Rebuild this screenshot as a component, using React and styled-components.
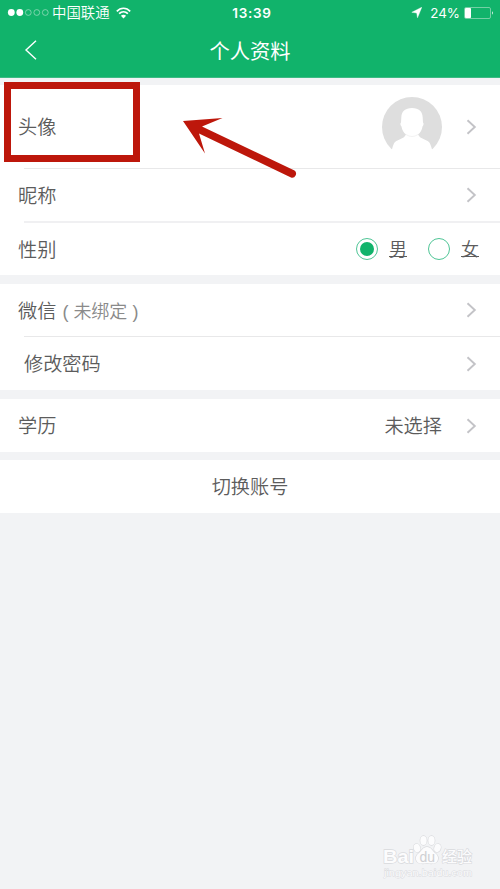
import styled, { createGlobalStyle } from "styled-components";

const GlobalStyle = createGlobalStyle`
  * {
    box-sizing: border-box;
  }
  body {
    margin: 0;
    background: #f2f3f5;
    color: #5c5c5c;
    font-family: "Liberation Sans", "Noto Sans CJK SC", sans-serif;
  }
`;

const Layout = styled.div`
  position: relative;
  display: flex;
  flex-direction: column;
  height: 889px;
  overflow: hidden;
  background: #f2f3f5;
`;
const Header = styled.header`
  height: 78px;
  background: #11b36b;
  border-bottom: 1px solid #3dbb84;
  color: #fff;
`;
const StatusBar = styled.div`
  display: grid;
  grid-template-columns: 1fr auto 1fr;
  align-items: center;
  height: 25px;
  padding: 0 6px 0 7px;
  font-family: Inter, "Noto Sans CJK SC", sans-serif;
`;
const StatusSide = styled.div`
  display: flex;
  align-items: center;
  justify-content: ${({ $end }) => ($end ? "flex-end" : "flex-start")};
`;
const Carrier = styled.span`
  margin: 0 6px 0 2px;
  font-size: 14.4px;
  line-height: 24px;
  font-weight: 350;
`;
const Time = styled.span`
  margin-left: 3px;
  font-size: 13.5px;
  font-weight: 600;
  letter-spacing: 0.7px;
`;
const Percent = styled.span`
  margin: 0 4px 0 8px;
  font-size: 13.4px;
`;
const NavBar = styled.div`
  display: grid;
  grid-template-columns: 60px 1fr 60px;
  align-items: center;
  height: 50px;
`;
const BackIcon = styled.svg`
  margin-left: 24px;
`;
const Title = styled.h1`
  margin: 4px 0 0;
  font-size: 20.3px;
  font-weight: 400;
  line-height: 30px;
  text-align: center;
`;
const Group = styled.section`
  margin-top: ${({ $gap }) => $gap || 8}px;
  background: #fff;
`;
const Row = styled.div`
  display: flex;
  align-items: center;
  justify-content: ${({ $center }) => ($center ? "center" : "space-between")};
  height: ${({ $height }) => $height || 53}px;
  padding: 0 ${({ $center }) => ($center ? 18 : 23)}px 0
    ${({ $indent }) => ($indent ? 24 : 18)}px;
`;
const Divider = styled.div`
  height: ${({ $size }) => $size || 1}px;
  margin-left: 24px;
  background: ${({ $size }) => ($size ? "#f0f0f2" : "#e8e8e9")};
`;
const Label = styled.span`
  padding-top: 3px;
  font-size: 19.2px;
  font-weight: 350;
  line-height: 28px;
`;
const Hint = styled.span`
  display: inline-flex;
  gap: 5px;
  margin-left: 6px;
  color: #8a8a8a;
  font-size: 18px;
`;
const Side = styled.div`
  display: flex;
  align-items: center;
  gap: ${({ $gap }) => $gap || 24}px;
`;
const RadioGroup = styled.div`
  display: flex;
  align-items: center;
  gap: 21px;
  margin-right: -2px;
`;
const RadioOption = styled.div`
  display: flex;
  align-items: center;
  gap: 11px;
`;
const Radio = styled.span`
  display: grid;
  place-items: center;
  width: 22px;
  height: 22px;
  border: 1px solid #4fc596;
  border-radius: 50%;
  &::after {
    content: "";
    width: 14px;
    height: 14px;
    border-radius: 50%;
    background: ${({ $checked }) => ($checked ? "#11b36b" : "transparent")};
  }
`;
const RadioText = styled.span`
  padding-top: 1px;
  font-size: 18px;
  font-weight: 350;
  line-height: 26px;
  text-decoration: underline;
  text-decoration-thickness: 1px;
  text-underline-offset: 0;
`;
const Highlight = styled.div`
  position: absolute;
  left: 4px;
  top: 82px;
  width: 136px;
  height: 80px;
  border: 7px solid #bd170b;
`;
const Pointer = styled.svg`
  position: absolute;
  left: 180px;
  top: 114px;
`;
const Watermark = styled.svg`
  position: absolute;
  left: 380px;
  top: 830px;
`;

const SignalDots = () => (
  <svg width="43" height="10" viewBox="0 0 43 10">
    {[0, 1, 2, 3, 4].map((index) => (
      <circle
        key={index}
        cx={4.3 + index * 8.5}
        cy="4.5"
        r={index < 2 ? 3.4 : 2.9}
        fill={index < 2 ? "#fff" : "none"}
        stroke={index < 2 ? "none" : "#a5e0c5"}
        strokeWidth="0.7"
      />
    ))}
  </svg>
);

const Wifi = () => (
  <svg width="15" height="12" viewBox="0 0 15 12" fill="none" stroke="#fff">
    <path d="M.8 4.3C4.6.2 10.4.2 14.2 4.3" strokeWidth="1.7" />
    <path d="M3.1 6.7c2.6-2.6 6.2-2.6 8.8 0" strokeWidth="1.7" />
    <path d="M4.9 8.7q2.6-2 5.2 0L7.5 11.4z" fill="#fff" stroke="none" />
  </svg>
);

const Location = () => (
  <svg width="11" height="11" viewBox="0 0 11 11">
    <path d="M10.8.2 6.5 10.8 5.7 6 .8 5.3z" fill="#fff" stroke="#fff" strokeWidth=".4" />
  </svg>
);

const Battery = () => (
  <svg width="30" height="12" viewBox="0 0 30 12">
    <rect x=".5" y=".5" width="26" height="11" rx="1.5" fill="none" stroke="#74d0a5" />
    <rect x="1" y="1" width="6" height="10" rx=".8" fill="#fff" />
    <path d="M28 4.3q2 1.7 0 3.4z" fill="#d3f0e2" />
  </svg>
);

const Chevron = () => (
  <svg width="11" height="16" viewBox="0 0 11 16">
    <path d="m1.5 1.2 7.3 6.8-7.3 6.8" fill="none" stroke="#c3c3c7" strokeWidth="1.9" />
  </svg>
);

const Avatar = () => (
  <svg width="60" height="60" viewBox="0 0 60 60">
    <circle cx="30" cy="30" r="30" fill="#dedede" />
    <path
      d="M30 11C37 11 40.5 14.5 40.7 20.5L41 25.5C42 26 41.700 28.5 40.5 29.5C40 33 38.5 35.5 36 37.5L38 40.3L44.5 43.5C48 45 48.5 47 50 52.5L53 60H7L10 52.5C11.5 47 12 45 15.5 43.5L22 40.3L24 37.5C21.5 35.5 20 33 19.5 29.5C18.3 28.5 18 26 19 25.5L19.3 20.5C19.5 14.5 23 11 30 11Z"
      fill="#fff"
    />
    <path d="M24 37.5q6 4 12 0" fill="none" stroke="#f3f3f3" />
  </svg>
);

const BaiduMark = () => (
  <Watermark width="100" height="50" viewBox="0 0 100 50">
    <g fill="#fcfcfd" stroke="#d9dadd" strokeWidth="1.3" paintOrder="stroke">
      <ellipse cx="37" cy="18" rx="3.2" ry="4.2" transform="rotate(-18 37 18)" />
      <ellipse cx="43.5" cy="10.5" rx="3.2" ry="4.6" />
      <ellipse cx="51.5" cy="10.5" rx="3.2" ry="4.6" />
      <ellipse cx="57.5" cy="18" rx="3.2" ry="4.2" transform="rotate(18 57.5 18)" />
      <path d="M47 17c-4 0-5.5 4-8 6s-4 4.5-2.5 7.8c2 4 6.5 2.5 10.5 2.5s8.5 1.5 10.5-2.5c1.5-3.3 0-5.8-2.5-7.8s-4-6-8-6z" />
      <text x="3" y="32.5" fontSize="19" fontWeight="700" textLength="31" lengthAdjust="spacingAndGlyphs">
        Bai
      </text>
      <text x="39.5" y="32" fontSize="14" fill="#cfd0d3" stroke="none">du</text>
      <text x="62" y="32" fontSize="15" fontWeight="500">经验</text>
      <text x="4" y="46" fontSize="9" strokeWidth=".8" textLength="88" lengthAdjust="spacingAndGlyphs">
        jingyan.baidu.com
      </text>
    </g>
  </Watermark>
);

const App = () => (
  <>
    <GlobalStyle />
    <Layout>
      <Header>
        <StatusBar>
          <StatusSide>
            <SignalDots />
            <Carrier>中国联通</Carrier>
            <Wifi />
          </StatusSide>
          <Time>13:39</Time>
          <StatusSide $end>
            <Location />
            <Percent>24%</Percent>
            <Battery />
          </StatusSide>
        </StatusBar>
        <NavBar>
          <BackIcon width="14" height="20" viewBox="0 0 14 20">
            <path d="M12 .8 2 10l10 9.2" fill="none" stroke="#fff" strokeWidth="1.4" />
          </BackIcon>
          <Title>个人资料</Title>
        </NavBar>
      </Header>
      <Group $gap={7}>
        <Row $height={83}>
          <Label>头像</Label>
          <Side>
            <Avatar />
            <Chevron />
          </Side>
        </Row>
        <Divider />
        <Row $height={52}>
          <Label>昵称</Label>
          <Chevron />
        </Row>
        <Divider $size={2} />
        <Row $height={52}>
          <Label>性别</Label>
          <RadioGroup>
            <RadioOption>
              <Radio $checked />
              <RadioText>男</RadioText>
            </RadioOption>
            <RadioOption>
              <Radio />
              <RadioText>女</RadioText>
            </RadioOption>
          </RadioGroup>
        </Row>
      </Group>
      <Group $gap={9}>
        <Row $height={52}>
          <Label>
            微信
            <Hint>
              <span>(</span>
              <span>未绑定</span>
              <span>)</span>
            </Hint>
          </Label>
          <Chevron />
        </Row>
        <Divider />
        <Row $indent>
          <Label>修改密码</Label>
          <Chevron />
        </Row>
      </Group>
      <Group $gap={9}>
        <Row>
          <Label>学历</Label>
          <Side>
            <Label>未选择</Label>
            <Chevron />
          </Side>
        </Row>
      </Group>
      <Group>
        <Row $center>
          <Label>切换账号</Label>
        </Row>
      </Group>
      <Highlight />
      <Pointer width="122" height="68" viewBox="0 0 122 68">
        <path
          d="M3 7 42.5 4 22 12.5 114.5 56.5a4 4 0 0 1-3.5 7L19 19.5 25 39.5z"
          fill="#bd170b"
        />
      </Pointer>
      <BaiduMark />
    </Layout>
  </>
);
export default App;
